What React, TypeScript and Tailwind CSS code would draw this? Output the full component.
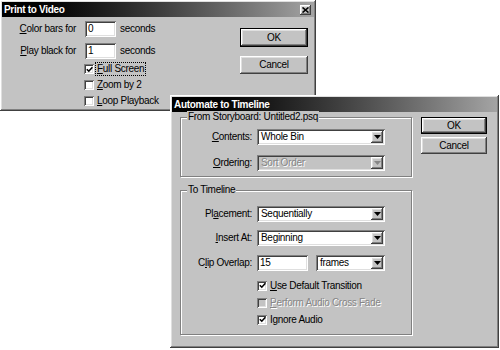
import React from 'react';

const raised =
  'shadow-[inset_-1px_-1px_0_#404040,inset_1px_1px_0_#ffffff,inset_-2px_-2px_0_#808080,inset_2px_2px_0_#dfdfdf]';
const sunken =
  'shadow-[inset_1px_1px_0_#808080,inset_-1px_-1px_0_#ffffff,inset_2px_2px_0_#404040,inset_-2px_-2px_0_#dfdfdf]';
const disabledText = 'text-[#868686] [text-shadow:1px_1px_0_#ffffff]';

function TitleBar({ title, close }: { title: string; close?: boolean }) {
  return (
    <div className="h-[15px] flex items-center justify-between bg-gradient-to-r from-black to-[#a4a4a4] pl-[2px] pr-[3px]">
      <span className="text-white font-bold">{title}</span>
      {close && (
        <span className={`w-[11px] h-[10px] bg-[#c3c3c3] flex items-center justify-center ${raised}`}>
          <svg width="7" height="6" viewBox="0 0 7 6">
            <path d="M0.5 0.5l6 5M6.5 0.5l-6 5" stroke="black" strokeWidth="1.6" />
          </svg>
        </span>
      )}
    </div>
  );
}

function Button({ label, isDefault, className = '' }: { label: string; isDefault?: boolean; className?: string }) {
  return (
    <div className={`${isDefault ? 'border border-black' : ''} ${className}`}>
      <div className={`h-full flex items-center justify-center bg-[#c3c3c3] ${raised}`}>{label}</div>
    </div>
  );
}

function TextField({ value, className = '' }: { value: string; className?: string }) {
  return (
    <div className={`h-[16px] bg-white ${sunken} flex items-center pl-[3px] ${className}`}>
      {value}
    </div>
  );
}

function Select({ value, width, disabled }: { value: string; width: string; disabled?: boolean }) {
  return (
    <div
      className={`h-[16px] ${width} ${disabled ? 'bg-[#c3c3c3]' : 'bg-white'} ${sunken} flex items-center justify-between pl-[4px] pr-[2px]`}
    >
      <span className={disabled ? disabledText : ''}>{value}</span>
      <span className={`w-[12px] h-[12px] bg-[#c3c3c3] ${raised} flex items-center justify-center`}>
        <svg width="7" height="4" viewBox="0 0 7 4">
          <path d="M0 0h7L3.5 4z" fill={disabled ? '#868686' : 'black'} />
        </svg>
      </span>
    </div>
  );
}

function Checkbox({ checked, disabled }: { checked?: boolean; disabled?: boolean }) {
  return (
    <span className={`w-[10px] h-[10px] shrink-0 ${disabled ? 'bg-[#c3c3c3]' : 'bg-white'} ${sunken} flex items-center justify-center`}>
      {checked && (
        <svg width="7" height="7" viewBox="0 0 7 7">
          <path d="M0.8 3.2l2 2 3.6-4" stroke="black" strokeWidth="1.6" fill="none" />
        </svg>
      )}
    </span>
  );
}

function CheckRow({
  children,
  checked,
  disabled,
  focus,
  className = '',
}: {
  children: React.ReactNode;
  checked?: boolean;
  disabled?: boolean;
  focus?: boolean;
  className?: string;
}) {
  return (
    <div className={`flex items-center ${className}`}>
      <Checkbox checked={checked} disabled={disabled} />
      <span
        className={`ml-[2px] px-[1px] leading-[12px] ${focus ? 'outline outline-1 outline-dotted outline-black' : ''} ${disabled ? disabledText : ''}`}
      >
        {children}
      </span>
    </div>
  );
}

function GroupBox({ legend, className = '', children }: { legend: string; className?: string; children: React.ReactNode }) {
  return (
    <div
      className={`relative border border-[#808080] shadow-[1px_1px_0_#ffffff,inset_1px_1px_0_#ffffff] ${className}`}
    >
      <span className="absolute -top-[7px] left-[6px] bg-[#c3c3c3] px-[1px] leading-[12px]">{legend}</span>
      {children}
    </div>
  );
}

function FieldRow({ label, children, className = '' }: { label: React.ReactNode; children: React.ReactNode; className?: string }) {
  return (
    <div className={`flex items-center ${className}`}>
      <span className="w-[71px] text-right">{label}</span>
      <div className="ml-[5px] flex items-center">{children}</div>
    </div>
  );
}

export default function App() {
  return (
    <div className="relative w-[500px] h-[350px] bg-white overflow-hidden text-black text-[10px] tracking-[-0.3px] font-['Liberation_Sans',Arial,sans-serif] leading-none">
      {/* Print to Video */}
      <div className={`absolute left-0 top-0 w-[316px] h-[111px] bg-[#c3c3c3] p-[2px] ${raised}`}>
        <TitleBar title="Print to Video" close />
        <div className="flex">
          <div className="pt-[4px]">
            <div className="flex items-center h-[16px]">
              <span className="w-[74px] text-right">
                <u>C</u>olor bars for
              </span>
              <TextField value="0" className="ml-[9px] w-[31px]" />
              <span className="ml-[4px]">seconds</span>
            </div>
            <div className="flex items-center h-[16px] mt-[6px]">
              <span className="w-[74px] text-right">
                <u>P</u>lay black for
              </span>
              <TextField value="1" className="ml-[9px] w-[31px]" />
              <span className="ml-[4px]">seconds</span>
            </div>
            <div className="pl-[82px] mt-[2px]">
              <CheckRow checked focus className="h-[16px]">
                <u>F</u>ull Screen
              </CheckRow>
              <CheckRow className="h-[16px]">
                <u>Z</u>oom by 2
              </CheckRow>
              <CheckRow className="h-[16px]">
                <u>L</u>oop Playback
              </CheckRow>
            </div>
          </div>
          <div className="ml-auto mr-[6px] pt-[11px] flex flex-col gap-[9px]">
            <Button label="OK" isDefault className="w-[68px] h-[19px]" />
            <Button label="Cancel" className="w-[68px] h-[18px]" />
          </div>
        </div>
      </div>

      {/* Automate to Timeline */}
      <div className={`absolute left-[170px] top-[95px] w-[329px] h-[253px] bg-[#c3c3c3] p-[2px] ${raised}`}>
        <TitleBar title="Automate to Timeline" />
        <div className="flex pl-[8px] pt-[5px]">
          <div className="w-[232px]">
            <GroupBox legend="From Storyboard: Untitled2.psq" className="h-[60px] pt-[11px]">
              <FieldRow
                label={
                  <>
                    <u>C</u>ontents:
                  </>
                }
              >
                <Select value="Whole Bin" width="w-[128px]" />
              </FieldRow>
              <FieldRow
                className="mt-[10px]"
                label={
                  <>
                    <u>O</u>rdering:
                  </>
                }
              >
                <Select value="Sort Order" width="w-[128px]" disabled />
              </FieldRow>
            </GroupBox>
            <GroupBox legend="To Timeline" className="mt-[13px] h-[145px] pt-[15px]">
              <FieldRow
                label={
                  <>
                    Pl<u>a</u>cement:
                  </>
                }
              >
                <Select value="Sequentially" width="w-[128px]" />
              </FieldRow>
              <FieldRow
                className="mt-[8px]"
                label={
                  <>
                    <u>I</u>nsert At:
                  </>
                }
              >
                <Select value="Beginning" width="w-[128px]" />
              </FieldRow>
              <FieldRow
                className="mt-[9px]"
                label={
                  <>
                    C<u>l</u>ip Overlap:
                  </>
                }
              >
                <TextField value="15" className="w-[51px]" />
                <div className="ml-[8px]">
                  <Select value="frames" width="w-[69px]" />
                </div>
              </FieldRow>
              <div className="pl-[76px] mt-[6px]">
                <CheckRow checked className="h-[17px]">
                  <u>U</u>se Default Transition
                </CheckRow>
                <CheckRow disabled className="h-[17px]">
                  <u>P</u>erform Audio Cross Fade
                </CheckRow>
                <CheckRow checked className="h-[17px]">
                  I<u>g</u>nore Audio
                </CheckRow>
              </div>
            </GroupBox>
          </div>
          <div className="ml-[9px] flex flex-col gap-[3px]">
            <Button label="OK" isDefault className="w-[66px] h-[17px]" />
            <Button label="Cancel" className="w-[66px] h-[17px]" />
          </div>
        </div>
      </div>
    </div>
  );
}
